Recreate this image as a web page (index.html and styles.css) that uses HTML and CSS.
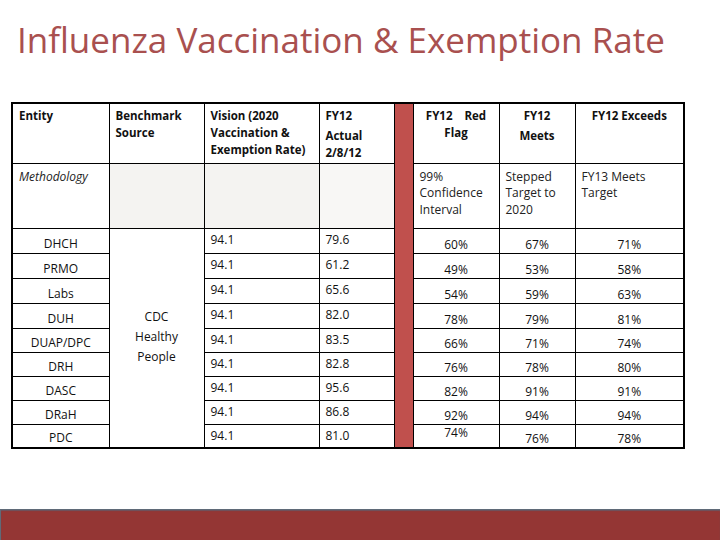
FILE: index.html
```html
<!DOCTYPE html>
<html>
<head>
<meta charset="utf-8">
<link rel="stylesheet" href="styles.css">
</head>
<body>
<div class="slide">
  <h1 class="title">Influenza Vaccination &amp; Exemption Rate</h1>
  <table class="grid">
    <colgroup>
      <col class="c1"><col class="c2"><col class="c3"><col class="c4"><col class="c5"><col class="c6"><col class="c7"><col class="c8">
    </colgroup>
    <tr class="hdr">
      <th class="left">Entity</th>
      <th class="left">Benchmark<br>Source</th>
      <th class="left">Vision (2020<br>Vaccination &amp;<br>Exemption Rate)</th>
      <th class="left"><div>FY12</div><div class="gap">Actual</div><div>2/8/12</div></th>
      <td class="red" rowspan="11"></td>
      <th class="center">FY12&nbsp;&nbsp;&nbsp; Red<br>Flag</th>
      <th class="center"><div>FY12</div><div class="gap">Meets</div></th>
      <th class="center">FY12 Exceeds</th>
    </tr>
    <tr class="meth">
      <td class="italic">Methodology</td>
      <td class="gray"></td>
      <td class="gray"></td>
      <td class="gray2"></td>
      <td>99%<br>Confidence<br>Interval</td>
      <td>Stepped<br>Target to<br>2020</td>
      <td>FY13 Meets<br>Target</td>
    </tr>
    <tr class="row r25">
      <td class="ent">DHCH</td>
      <td class="src" rowspan="9">CDC<br>Healthy<br>People</td>
      <td class="num">94.1</td><td class="num">79.6</td>
      <td class="pct">60%</td><td class="pct">67%</td><td class="pct">71%</td>
    </tr>
    <tr class="row r25">
      <td class="ent">PRMO</td>
      <td class="num">94.1</td><td class="num">61.2</td>
      <td class="pct">49%</td><td class="pct">53%</td><td class="pct">58%</td>
    </tr>
    <tr class="row r25">
      <td class="ent">Labs</td>
      <td class="num">94.1</td><td class="num">65.6</td>
      <td class="pct">54%</td><td class="pct">59%</td><td class="pct">63%</td>
    </tr>
    <tr class="row r25">
      <td class="ent">DUH</td>
      <td class="num">94.1</td><td class="num">82.0</td>
      <td class="pct">78%</td><td class="pct">79%</td><td class="pct">81%</td>
    </tr>
    <tr class="row r24">
      <td class="ent">DUAP/DPC</td>
      <td class="num">94.1</td><td class="num">83.5</td>
      <td class="pct">66%</td><td class="pct">71%</td><td class="pct">74%</td>
    </tr>
    <tr class="row r24">
      <td class="ent">DRH</td>
      <td class="num">94.1</td><td class="num">82.8</td>
      <td class="pct">76%</td><td class="pct">78%</td><td class="pct">80%</td>
    </tr>
    <tr class="row r24">
      <td class="ent">DASC</td>
      <td class="num">94.1</td><td class="num">95.6</td>
      <td class="pct">82%</td><td class="pct">91%</td><td class="pct">91%</td>
    </tr>
    <tr class="row r24">
      <td class="ent">DRaH</td>
      <td class="num">94.1</td><td class="num">86.8</td>
      <td class="pct">92%</td><td class="pct">94%</td><td class="pct">94%</td>
    </tr>
    <tr class="row r24">
      <td class="ent">PDC</td>
      <td class="num">94.1</td><td class="num">81.0</td>
      <td class="pct up">74%</td><td class="pct">76%</td><td class="pct">78%</td>
    </tr>
  </table>
  <div class="spacer"></div>
  <div class="footer"></div>
</div>
</body>
</html>
```

FILE: styles.css
```css
html, body {
  margin: 0;
  padding: 0;
  background: #ffffff;
}

.slide {
  width: 720px;
  height: 540px;
  display: flex;
  flex-direction: column;
  font-family: "Open Sans", "Liberation Sans", sans-serif;
  color: #111;
}

.title {
  margin: 16px 0 0 17px;
  font-family: "Open Sans", "Liberation Sans", sans-serif;
  font-weight: 400;
  font-size: 35px;
  line-height: 48px;
  height: 48px;
  color: #a9504f;
  letter-spacing: 0;
  white-space: nowrap;
}

.grid {
  margin: 38px 0 0 11px;
  width: 672px;
  border-collapse: collapse;
  table-layout: fixed;
  border: 2px solid #000;
  font-size: 12px;
}

.c1 { width: 97px; }
.c2 { width: 95px; }
.c3 { width: 115px; }
.c4 { width: 75px; }
.c5 { width: 19px; }
.c6 { width: 86px; }
.c7 { width: 76px; }
.c8 { width: 109px; }

.grid th,
.grid td {
  border: 1px solid #000;
  padding: 0;
}

.hdr { height: 60px; }
.hdr th {
  vertical-align: top;
  font-weight: 700;
  line-height: 17px;
  padding: 3px 6px 0 6px;
  font-size: 11.5px;
}
.hdr th.left { text-align: left; }
.hdr th.center { text-align: center; }
.hdr .gap { margin-top: 3px; }

.red {
  background: #c0504d;
}

.meth { height: 65px; }
.meth td {
  vertical-align: top;
  line-height: 16.5px;
  padding: 5px 6px 0 6px;
  color: #222;
}
.meth td.italic { font-style: italic; }
.meth td.gray { background: #f4f3f1; }
.meth td.gray2 { background: #f8f7f5; }

.r25 { height: 25px; }
.r24 { height: 24px; }

.row td {
  line-height: 16px;
}
.row td.ent {
  text-align: center;
  vertical-align: bottom;
  padding-bottom: 1px;
}
.row td.src {
  text-align: center;
  vertical-align: middle;
  line-height: 20px;
  padding-bottom: 2px;
}
.row td.num {
  text-align: left;
  vertical-align: top;
  padding: 3px 6px 0 6px;
}
.row td.pct {
  text-align: center;
  vertical-align: bottom;
  padding-bottom: 0;
}
.row td.pct.up {
  vertical-align: top;
  padding-top: 0;
}

.spacer { flex: 1; }

.footer {
  height: 30px;
  background: #943634;
  border-top: 1px solid #5f6a78;
  border-left: 1px solid #5f6a78;
  box-shadow: inset 0 1px 1px #6b5560;
}
```
